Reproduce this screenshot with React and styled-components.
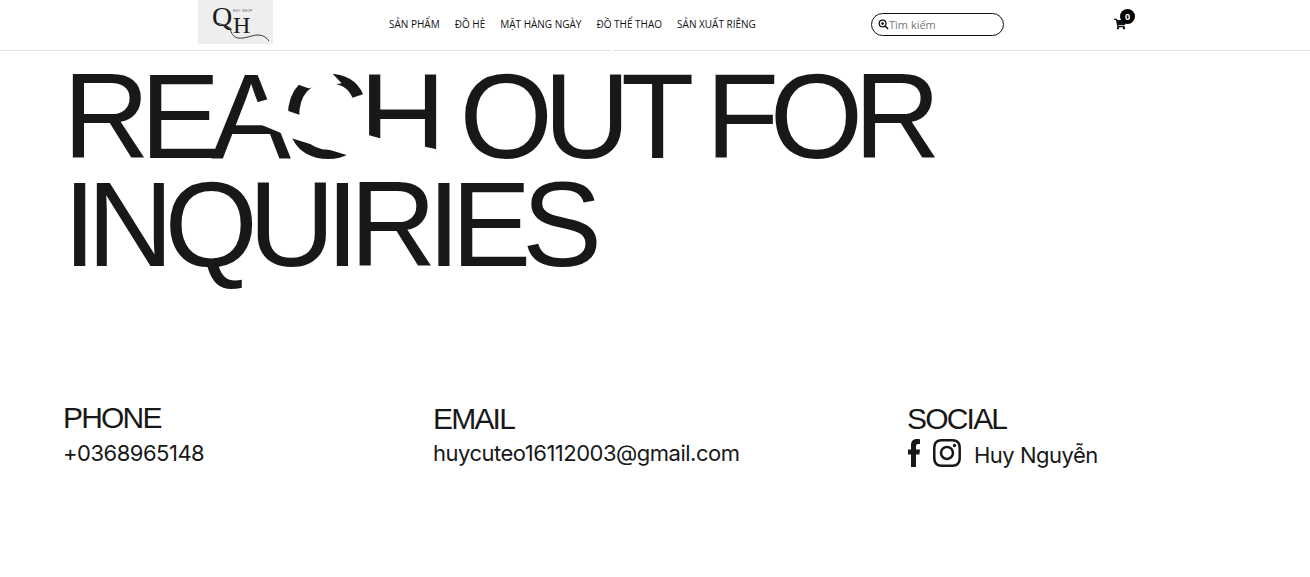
import styled, { createGlobalStyle } from "styled-components";
import { FaInstagram, FaShoppingCart } from "react-icons/fa";

const NAV_ITEMS = ["SẢN PHẨM", "ĐỒ HÈ", "MẶT HÀNG NGÀY", "ĐỒ THỂ THAO", "SẢN XUẤT RIÊNG"];

const App = () => {
  return (
    <>
      <GlobalStyle />
      <Header>
        <Logo>
          <LogoLetter $left={14} $top={3} $size={28}>Q</LogoLetter>
          <LogoLetter $left={35} $top={13} $size={24}>H</LogoLetter>
          <LogoTag>HUY SHOP</LogoTag>
          <LogoSwoosh viewBox="0 0 75 44">
            <path d="M18 23 C24 24 29 26 32 28 C33 33 35 37 40 38 C47 39 54 35 60 35 C65 35 69 38 71 41" fill="none" stroke="#222" strokeWidth="0.9" />
          </LogoSwoosh>
        </Logo>
        <Nav>
          {NAV_ITEMS.map((item) => (
            <NavLink key={item}>{item}</NavLink>
          ))}
        </Nav>
        <Search>
          <SearchIcon viewBox="0 0 12 12">
            <circle cx="5" cy="5" r="3.7" fill="none" stroke="#111" strokeWidth="1.4" />
            <circle cx="5" cy="5" r="1.5" fill="#111" />
            <path d="M8 8 L11 11" stroke="#111" strokeWidth="1.6" />
          </SearchIcon>
          <SearchInput placeholder="Tìm kiếm" />
        </Search>
        <Cart>
          <FaShoppingCart size={12} color="#111" />
          <CartBadge>0</CartBadge>
        </Cart>
      </Header>

      <Main>
        <Hero>
          <Title>REACH OUT FOR<br />INQUIRIES</Title>
          {/* white brush marks laid over the heading */}
          <Blob viewBox="0 0 1350 390">
            <path d="M1230 14 H1242 V18 H1230 Z" fill="#fff" opacity="0.7" />
            <path d="M270 110 L325 130 L425 115 L392 80 L300 70 Z" fill="#fff" />
            <path d="M172 172 L203 163 L265 198 L300 210 L330 200 L440 180 L505 270 L540 280 L675 305 L707 312 L720 350 L470 350 L440 330 L340 300 L275 280 L245 265 L185 240 Z" fill="#fff" />
          </Blob>
        </Hero>

        <Contacts>
          <Contact $width={370}>
            <ContactTitle $raise>PHONE</ContactTitle>
            <ContactText>+0368965148</ContactText>
          </Contact>
          <Contact $width={474}>
            <ContactTitle>EMAIL</ContactTitle>
            <ContactText>huycuteo16112003@gmail.com</ContactText>
          </Contact>
          <Contact>
            <ContactTitle>SOCIAL</ContactTitle>
            <SocialRow>
              <FacebookIcon viewBox="0 0 12 28">
                <path d="M8 28 V15.5 H11.4 L12 10.5 H8 V7.5 C8 6 8.5 5 10.3 5 H12 V0.3 C11.5 0.2 10.2 0 8.8 0 C5.4 0 3 2 3 6.5 V10.5 H0 V15.5 H3 V28 Z" fill="#181818" />
              </FacebookIcon>
              <FaInstagram size={32} color="#181818" />
              <SocialName>Huy Nguyễn</SocialName>
            </SocialRow>
          </Contact>
        </Contacts>
      </Main>
    </>
  );
};

export default App;

const GlobalStyle = createGlobalStyle`
  body {
    margin: 0;
    background: #fff;
    color: #181818;
    font-family: "Liberation Sans", Arial, sans-serif;
    overflow: hidden;
  }
`;

const Header = styled.header`
  height: 50px;
  display: flex;
  align-items: flex-start;
  padding-left: 198px;
  border-bottom: 1px solid #e2e2e2;
`;

const Logo = styled.div`
  position: relative;
  width: 75px;
  height: 44px;
  flex-shrink: 0;
  overflow: hidden;
  background: #eeeeee;
`;

const LogoLetter = styled.span`
  position: absolute;
  left: ${(p) => p.$left}px;
  top: ${(p) => p.$top}px;
  font-family: "Liberation Serif", serif;
  font-size: ${(p) => p.$size}px;
  line-height: 1;
  color: #1a1a1a;
`;

const LogoTag = styled.span`
  position: absolute;
  left: 35px;
  top: 9px;
  font-size: 3px;
  letter-spacing: 0.5px;
  color: #444;
`;

const LogoSwoosh = styled.svg`
  position: absolute;
  inset: 0;
  width: 100%;
  height: 100%;
`;

const Nav = styled.nav`
  display: flex;
  gap: 15px;
  margin-left: 116px;
  height: 50px;
  align-items: center;
  width: 482px;
  flex-shrink: 0;
  padding-bottom: 2px;
  box-sizing: border-box;
`;

const NavLink = styled.a`
  font-family: "Open Sans", sans-serif;
  font-size: 10px;
  color: #111;
  white-space: nowrap;
`;

const Search = styled.div`
  display: flex;
  align-items: center;
  box-sizing: border-box;
  width: 133px;
  height: 23px;
  margin-top: 13px;
  padding-left: 6px;
  border: 1px solid #111;
  border-radius: 12px;
`;

const SearchIcon = styled.svg`
  width: 11px;
  height: 11px;
  flex-shrink: 0;
`;

const SearchInput = styled.input`
  border: none;
  outline: none;
  width: 100px;
  padding: 0;
  background: transparent;
  font-family: "Open Sans", sans-serif;
  font-size: 11px;

  &::placeholder {
    color: #777;
  }
`;

const Cart = styled.div`
  position: relative;
  margin-left: 110px;
  margin-top: 18px;
  line-height: 0;
`;

const CartBadge = styled.span`
  position: absolute;
  left: 6px;
  top: -9px;
  width: 15px;
  height: 15px;
  border-radius: 50%;
  background: #000;
  color: #fff;
  font-family: "Open Sans", sans-serif;
  font-size: 9px;
  font-weight: 700;
  line-height: 15px;
  text-align: center;
`;

const Main = styled.main`
  padding: 11px 0 0 64px;
`;

const Hero = styled.section`
  position: relative;
  height: 340px;
`;

const Title = styled.h1`
  margin: 0 0 0 -1px;
  font-size: 120px;
  font-weight: 400;
  line-height: 108px;
  letter-spacing: -9.3px;
  word-spacing: -1px;
  color: #181818;
`;

const Blob = styled.svg`
  position: absolute;
  left: 136px;
  top: -17px;
  width: 450px;
  height: 130px;
`;

const Contacts = styled.section`
  display: flex;
  margin-left: -1px;
`;

const Contact = styled.div`
  width: ${(p) => (p.$width ? `${p.$width}px` : "auto")};
`;

const ContactTitle = styled.h2`
  margin: 0;
  position: relative;
  top: ${(p) => (p.$raise ? "-1px" : "0")};
  font-size: 30px;
  font-weight: 400;
  line-height: 33px;
  letter-spacing: -1.8px;
`;

const ContactText = styled.p`
  margin: 0;
  font-family: "Inter", sans-serif;
  font-size: 22px;
  line-height: 36px;
  letter-spacing: -0.5px;
`;

const SocialRow = styled.div`
  display: flex;
  align-items: center;
  gap: 11px;
  height: 36px;
  padding-left: 1px;
`;

const FacebookIcon = styled.svg`
  width: 12px;
  height: 28px;
`;

const SocialName = styled.span`
  position: relative;
  top: 2px;
  font-family: "Inter", sans-serif;
  font-size: 22px;
  letter-spacing: -0.5px;
`;
